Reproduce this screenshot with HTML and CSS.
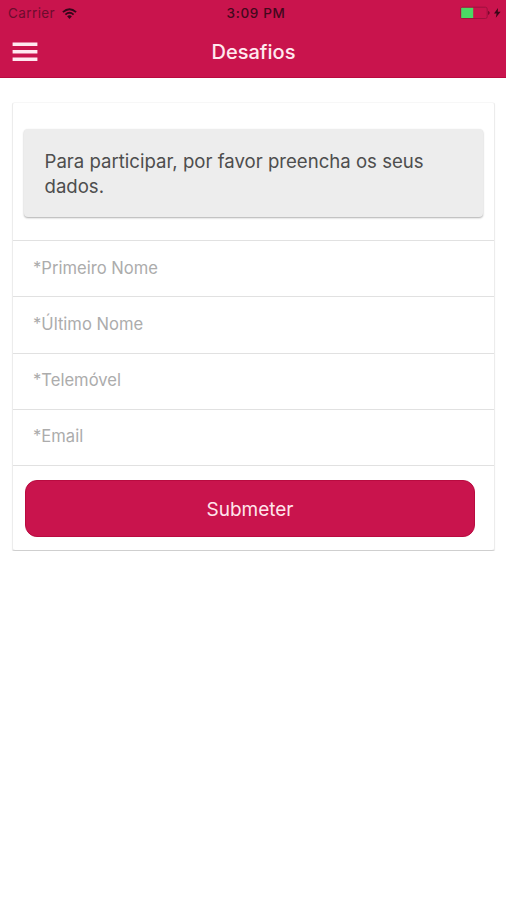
FILE: index.html
```
<!DOCTYPE html>
<html lang="pt">
<head>
<meta charset="utf-8">
<title>Desafios</title>
<link rel="stylesheet" href="styles.css">
</head>
<body>
<header class="header">
  <div class="status">
    <div class="carrier"><span class="carrier-name">Carrier</span>
      <svg class="wifi" width="15" height="11" viewBox="0 0 15 11" fill="none" stroke="currentColor" stroke-width="1.9"><path d="M.9 4.1Q7.5-1.6 14.1 4.1M3.4 6.6Q7.5 3.1 11.6 6.6"/><path d="M5.1 8.3Q7.5 6.4 9.9 8.3L7.5 10.9Z" fill="currentColor" stroke="none"/></svg>
    </div>
    <div class="time"><span class="time-text">3:09 PM</span></div>
    <svg class="battery" width="42" height="14" viewBox="0 0 42 14"><rect x=".7" y="1.2" width="26.5" height="11.3" rx="1.8" fill="none" stroke="#9f113e"/><rect x="1.2" y="1.8" width="12" height="10.2" fill="#4bd964"/><path d="M28 4.8Q31.5 6.9 28 9Z" fill="#7a0b2d"/><path d="M38 2L34 7.4H36.6L35.8 11.8L40.6 5.8H37.8Z" fill="#3a0717"/></svg>
  </div>
  <div class="toolbar">
    <svg class="menu" width="26" height="20" viewBox="0 0 26 20" fill="#ffe8ef"><path d="M.6 .6H25.4V4.1H.6ZM.6 8H25.4V11.5H.6ZM.6 15.4H25.4V18.9H.6Z"/></svg>
    <h1 class="title"><span class="title-text">Desafios</span></h1>
  </div>
</header>
<main class="card">
  <div class="intro"><p class="notice">Para participar, por favor preencha os seus<br>dados.</p></div>
  <div class="field"><span class="label">*Primeiro Nome</span></div>
  <div class="field"><span class="label">*Último Nome</span></div>
  <div class="field"><span class="label">*Telemóvel</span></div>
  <div class="field"><span class="label">*Email</span></div>
  <div class="actions"><button class="submit">Submeter</button></div>
</main>
</body>
</html>
```
FILE: styles.css
```
* { box-sizing: border-box; }
body { margin: 0; background: #fff; font-family: Inter, "Liberation Sans", sans-serif; }
.header { height: 78px; background: #c9144d; border-bottom: 1px solid #b90b40; }
.status { height: 26px; display: grid; grid-template-columns: 1fr auto 1fr; align-items: center; padding: 0 4px 0 8px; color: #4b0a20; }
.carrier { display: flex; align-items: center; gap: 7px; font-size: 13.5px; line-height: 26px; letter-spacing: .4px; color: #6d0c2d; }
.wifi { color: #35061a; }
.time { font-size: 13.5px; font-weight: 500; line-height: 26px; letter-spacing: .65px; color: #43081c; transform: translateX(1px); }
.battery { justify-self: end; }
.toolbar { height: 52px; display: grid; grid-template-columns: 26px 1fr 26px; align-items: center; padding: 0 12px; }
.menu { display: block; }
.title { margin: 0; padding-left: 1px; text-align: center; font-size: 20px; line-height: 24px; font-weight: 500; color: #ffe9ef; }
.card { margin: 24px 11px 0 12px; height: 449px; border-radius: 3px; background: #fff; border: 1px solid #ececec; border-top-color: #f7f7f7; border-bottom-color: #cfcfcf; box-shadow: 0 1px 1px rgba(0,0,0,.1); }
.intro { height: 137px; padding: 26px 11px 0; }
.notice { margin: 0; height: 88px; padding: 20px 20.5px; border-radius: 4px; background: #ededed; box-shadow: 0 1px 2px rgba(0,0,0,.32); color: #4e4e4e; font-size: 18.6px; line-height: 24.5px; white-space: nowrap; }
.field { height: 56.25px; padding: 0 20px 2px; border-top: 1.5px solid #e1e1e1; display: flex; align-items: center; color: #acacac; font-size: 16.6px; }
.actions { border-top: 1.5px solid #e1e1e1; padding: 14px 19px 0 12px; }
.submit { display: block; width: 100%; height: 57px; padding: 2px 0 0; border: 1px solid #b90b40; border-radius: 12px; background: #c9144d; color: #ffe4eb; font: 400 19px Inter, sans-serif; }
```
